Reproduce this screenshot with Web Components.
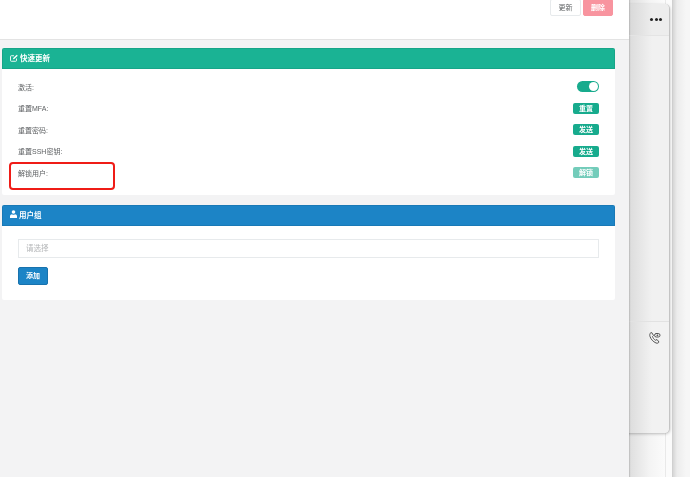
<!DOCTYPE html>
<html>
<head>
<meta charset="utf-8">
<style>
  html, body { margin: 0; height: 100%; overflow: hidden; background: #f2f2f2; }
  body { font-family: "Liberation Sans", "Noto Sans CJK SC", sans-serif; font-size: 7px; color: #5c5f61; }
</style>
</head>
<body>
<app-desktop>
  <user-page>
    <page-header slot="header">
      <ui-btn>更新</ui-btn>
      <ui-btn kind="danger">删除</ui-btn>
    </page-header>
    <ui-panel heading="快速更新" color="#1ab394" icon="edit">
      <quick-rows>
        <form-row label="激活:"><ui-toggle></ui-toggle></form-row>
        <form-row label="重置MFA:"><ui-badge>重置</ui-badge></form-row>
        <form-row label="重置密码:"><ui-badge>发送</ui-badge></form-row>
        <form-row label="重置SSH密钥:"><ui-badge>发送</ui-badge></form-row>
        <form-row label="解锁用户:" marked><ui-badge faded>解锁</ui-badge></form-row>
      </quick-rows>
    </ui-panel>
    <ui-panel heading="用户组" color="#1c84c6" icon="user">
      <group-form></group-form>
    </ui-panel>
  </user-page>
  <back-window slot="behind"></back-window>
  <chat-window slot="behind"></chat-window>
</app-desktop>

<script>
// small helper, every element below is just markup + styles in an open shadow root
function define(name, html) {
  customElements.define(name, class extends HTMLElement {
    connectedCallback() {
      if (this.shadowRoot) return;
      this.attachShadow({ mode: 'open' });
      this.shadowRoot.innerHTML = typeof html === 'function' ? html(this) : html;
    }
  });
}

define('app-desktop', `
  <style>
    :host { display: block; position: relative; width: 690px; height: 477px; overflow: hidden; filter: blur(.3px);
      background: linear-gradient(90deg, #d6d6d6 673px, #ececec 677px, #f6f6f6 686px); }
    .front { position: relative; z-index: 2; width: 629px; height: 100%; }
  </style>
  <slot name="behind"></slot>
  <div class="front"><slot></slot></div>
`);

define('user-page', `
  <style>
    :host { display: flex; flex-direction: column; height: 100%; background: #f3f3f4; box-shadow: 1px 0 1px rgba(0,0,0,.12); }
    .content { display: flex; flex-direction: column; gap: 10px; padding: 8px 14px 0 2px; }
  </style>
  <slot name="header"></slot>
  <div class="content"><slot></slot></div>
`);

define('page-header', `
  <style>
    :host { display: flex; justify-content: flex-end; align-items: flex-start; gap: 2px; box-sizing: border-box;
      height: 40px; padding-right: 16px; background: #fff; border-bottom: 1px solid #e3e3e3; }
  </style>
  <slot></slot>
`);

define('ui-btn', el => `
  <style>
    :host { display: block; box-sizing: border-box; width: ${el.getAttribute('kind') === 'danger' ? 30 : 31}px; height: 17px; line-height: 15px; margin-top: -1px; text-align: center;
      font-size: 7px; border-radius: 2px;
      ${el.getAttribute('kind') === 'danger'
        ? 'background:#f8949f;border:1px solid #f8949f;color:#fff;font-weight:700;'
        : 'background:#fff;border:1px solid #e7eaec;color:#5c5f61;'} }
  </style>
  <slot></slot>
`);

const icons = {
  edit: `<svg width="8" height="8" viewBox="0 0 16 16" fill="none" stroke="#fff" stroke-width="1.800"><path d="M13 9v4a1.500 1.500 0 0 1-1.500 1.500h-9A1.500 1.500 0 0 1 1 13V5a1.500 1.500 0 0 1 1.500-1.500H8"/><path d="M6 10.500l.5-2.500 7-6.500 2 2-7 6.500z" fill="#fff" stroke="none"/></svg>`,
  user: `<svg width="7" height="8" viewBox="0 0 14 16" fill="#fff"><circle cx="7" cy="4" r="3.600"/><path d="M0 16v-3.500C0 10 2 8.300 4 8.300c1 .8 2 1.100 3 1.100s2-.3 3-1.100c2 0 4 1.700 4 4.200V16z"/></svg>`
};

define('ui-panel', el => `
  <style>
    :host { display: block; background: #fff; border-radius: 2px; overflow: hidden; }
    .head { display: flex; align-items: center; gap: 2px; box-sizing: border-box; height: 21px; padding: 0 0 2px 7px;
      background: ${el.getAttribute('color')}; border: 1px solid rgba(0,0,0,.08); color: #fff; font-size: 7.500px; font-weight: 700; }
    svg { display: block; flex: none; }
    .body { padding: 0 16px; }
  </style>
  <div class="head">${icons[el.getAttribute('icon')]}<span>${el.getAttribute('heading')}</span></div>
  <div class="body"><slot></slot></div>
`);

define('quick-rows', `
  <style>:host { display: flex; flex-direction: column; padding: 7px 0 11px; }</style>
  <slot></slot>
`);

define('form-row', el => `
  <style>
    :host { display: flex; justify-content: space-between; align-items: center; position: relative; height: 21.500px; font-size: 7px; color: #5c5f61; }
    .mark { position: absolute; left: -9px; top: 0; box-sizing: border-box; width: 106px; height: 28px;
      border: 2px solid #ef1c17; border-radius: 4px; }
  </style>
  <span>${el.getAttribute('label')}</span>
  <slot></slot>
  ${el.hasAttribute('marked') ? '<div class="mark"></div>' : ''}
`);

define('ui-badge', el => `
  <style>
    :host { display: block; box-sizing: border-box; width: 26px; height: 11px; line-height: 11px; text-align: center;
      background: #17ab8d; border-radius: 2px; color: #fff; font-size: 7px; font-weight: 700;
      ${el.hasAttribute('faded') ? 'opacity: .6;' : ''} }
  </style>
  <slot></slot>
`);

define('ui-toggle', `
  <style>
    :host { display: block; position: relative; box-sizing: border-box; width: 22px; height: 11px; background: #17ab8d; border-radius: 6px; }
    .knob { position: absolute; right: 1px; top: 1px; width: 9px; height: 9px; border-radius: 50%; background: #fff; }
  </style>
  <div class="knob"></div>
`);

define('group-form', `
  <style>
    :host { display: flex; flex-direction: column; align-items: flex-start; gap: 9px; padding: 13px 0 15px; }
    .select { box-sizing: border-box; width: 100%; height: 19px; line-height: 17px; padding-left: 7px;
      border: 1px solid #e7eaec; background: #fff; color: #b3b5b7; font-size: 7.500px; }
    .add { box-sizing: border-box; width: 30px; height: 18px; line-height: 16px; text-align: center;
      background: #1c84c6; border: 1px solid #1872ad; border-radius: 2px; color: #fff; font-size: 7px; font-weight: 700; }
  </style>
  <div class="select">请选择</div>
  <div class="add">添加</div>
`);

// the window under the chat one, only its right part shows past the page
define('back-window', `
  <style>
    :host { display: block; position: absolute; left: 560px; top: 0; width: 113px; height: 477px; box-sizing: border-box;
      background: linear-gradient(90deg, #dedede 69px, #f4f4f4 90px, #fbfbfb 105px); border-right: 1px solid #d0d0d0; }
    .line { position: absolute; left: 105px; top: 0; width: 1px; height: 100%; background: #e9e9e9; }
  </style>
  <div class="line"></div>
`);

define('chat-window', `
  <style>
    :host { display: block; position: absolute; left: 560px; top: 4px; width: 110px; height: 429px; box-sizing: border-box;
      background: #f1f1f1; border-right: 1px solid #c4c4c4; border-radius: 0 5px 5px 0; overflow: hidden;
      box-shadow: 0 1px 3px rgba(0,0,0,.25); }
    .top { height: 31px; border-bottom: 1px solid #e4e4e4; background: linear-gradient(90deg, #d8d8d8 69px, #ededed 92px); }
    .dots { position: absolute; left: 90px; top: 14px; display: flex; gap: 1.500px; }
    .dots i { width: 3px; height: 3px; border-radius: 50%; background: #222; }
    .mid { height: 285px; background: linear-gradient(90deg, #dcdcdc 69px, #f1f1f1 92px); border-bottom: 1px solid #e2e2e2; }
    .low { height: 111px; background: linear-gradient(90deg, #dcdcdc 69px, #f2f2f2 92px); }
    svg { position: absolute; left: 89px; top: 328px; }
  </style>
  <div class="top"></div>
  <div class="dots"><i></i><i></i><i></i></div>
  <div class="mid"></div>
  <div class="low"></div>
  <svg width="12" height="12" viewBox="0 0 24 24" fill="none" stroke="#555" stroke-width="2" stroke-linecap="round" stroke-linejoin="round">
    <path d="M3 2C1.500 4 1 6 2 9c2 6 6 10 12 13 3 1 5 0 6-2l-4-5-3 1.500C10 15 8 12 7 9l2-2L6 2z"/>
    <rect x="11" y="3" width="11" height="7" rx="3.500"/>
    <circle cx="16.500" cy="6.500" r=".8"/>
  </svg>
`);
</script>
</body>
</html>
